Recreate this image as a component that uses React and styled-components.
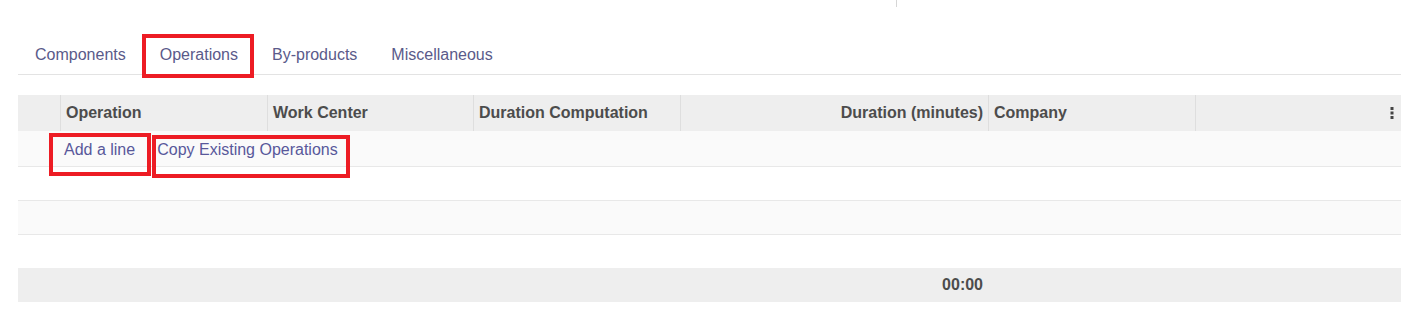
import React from "react";
import styled, { createGlobalStyle } from "styled-components";

const GlobalStyle = createGlobalStyle`
    * { box-sizing: border-box; }
    body {
        margin: 0;
        background: #fff;
        font-family: "Liberation Sans", Arial, sans-serif;
        font-size: 16px;
        color: #4c4c4c;
    }
`;

const RED = "#ed1c24";
const COLUMNS = "42px 207px 206px 207px 308px 207px 206px";

const Page = styled.div`
    width: 1411px;
    padding: 0 10px 0 18px;
`;

const TopStrip = styled.div`
    height: 8px;
    display: flex;
`;

const StripDivider = styled.span`
    margin-left: 878px;
    width: 1px;
    height: 7px;
    background: #d6d6d6;
`;

const TabBar = styled.nav`
    margin-top: 26px;
    display: flex;
    border-bottom: 1px solid #e3e3e3;
`;

const Tab = styled.a`
    display: block;
    padding: 11px 17px 9px;
    line-height: 20px;
    color: #5a5a8a;
    cursor: pointer;
`;

// red annotation frame drawn over the marked element
const Marked = styled.span`
    position: relative;
    display: inline-block;
    &::after {
        content: "";
        position: absolute;
        top: ${p => p.$top}px;
        left: ${p => p.$left}px;
        right: ${p => p.$right}px;
        bottom: ${p => p.$bottom}px;
        border: 4px solid ${RED};
        pointer-events: none;
    }
`;

const Table = styled.div`
    margin-top: 20px;
    width: 1383px;
`;

const Row = styled.div`
    display: grid;
    grid-template-columns: ${COLUMNS};
    height: ${p => p.$height}px;
    background: ${p => p.$bg || "#fff"};
    border-bottom: ${p => (p.$line ? "1px solid #e8e8e8" : "none")};
`;

const HeadCell = styled.div`
    display: flex;
    align-items: center;
    justify-content: ${p => (p.$right ? "flex-end" : "flex-start")};
    padding: 0 ${p => p.$padRight ?? 5}px 0 5px;
    border-left: ${p => (p.$first ? "none" : "1px solid #dedede")};
    font-weight: bold;
    color: #4c4c4c;
    white-space: nowrap;
    overflow: hidden;
`;

const FootCell = styled.div`
    display: flex;
    align-items: center;
    justify-content: flex-end;
    padding-right: 5px;
    font-weight: bold;
    color: #4c4c4c;
    grid-column: ${p => p.$col};
`;

const AddLineCell = styled.div`
    grid-column: 2 / -1;
    display: flex;
    align-items: center;
    padding: 2px 0 0 4px;
`;

const LineLink = styled.a`
    display: inline-block;
    line-height: 20px;
    color: #58589a;
    cursor: pointer;
`;

const CopyWrap = styled.div`
    margin-left: 22px;
`;

const Kebab = () => (
    <svg width="4" height="12" viewBox="0 0 4 12">
        <rect x="0.5" y="0" width="3" height="3" fill="#444" />
        <rect x="0.5" y="4.5" width="3" height="3" fill="#444" />
        <rect x="0.5" y="9" width="3" height="3" fill="#444" />
    </svg>
);

const headers = [
    { label: "" },
    { label: "Operation" },
    { label: "Work Center" },
    { label: "Duration Computation" },
    { label: "Duration (minutes)", right: true },
    { label: "Company" },
    { label: <Kebab />, right: true, padRight: 7 }
];

export default function App() {
    return (
        <Page>
            <GlobalStyle />
            <TopStrip>
                <StripDivider />
            </TopStrip>
            <TabBar>
                <Tab>Components</Tab>
                <Marked $top={0} $left={-1} $right={1} $bottom={-4}>
                    <Tab>Operations</Tab>
                </Marked>
                <Tab>By-products</Tab>
                <Tab>Miscellaneous</Tab>
            </TabBar>
            <Table>
                <Row $height={36} $bg="#eeeeee">
                    {headers.map((h, i) => (
                        <HeadCell key={i} $first={i === 0} $right={h.right} $padRight={h.padRight}>
                            {h.label}
                        </HeadCell>
                    ))}
                </Row>
                <Row $height={36} $bg="#fafafa" $line>
                    <AddLineCell>
                        <Marked $top={-7} $left={-15} $right={-16} $bottom={-16}>
                            <LineLink>Add a line</LineLink>
                        </Marked>
                        <CopyWrap>
                            <Marked $top={-5} $left={-5} $right={-12} $bottom={-18}>
                                <LineLink>Copy Existing Operations</LineLink>
                            </Marked>
                        </CopyWrap>
                    </AddLineCell>
                </Row>
                <Row $height={34} $line />
                <Row $height={34} $bg="#fafafa" $line />
                <Row $height={33} />
                <Row $height={34} $bg="#eeeeee">
                    <FootCell $col={5}>00:00</FootCell>
                </Row>
            </Table>
        </Page>
    );
}
